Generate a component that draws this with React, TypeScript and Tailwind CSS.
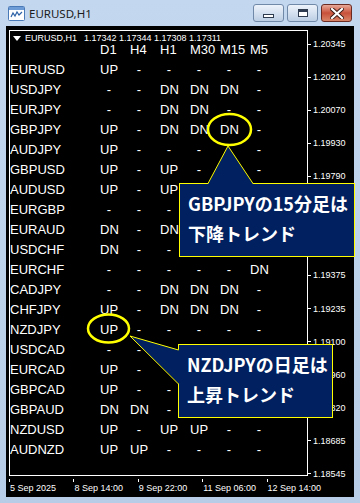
import React from "react";

const cols = ["D1", "H4", "H1", "M30", "M15", "M5"];

// "_" = cell hidden under a callout
const rows: [string, string][] = [
  ["EURUSD", "UP - - - - -"],
  ["USDJPY", "- - DN DN DN -"],
  ["EURJPY", "- - DN DN - -"],
  ["GBPJPY", "UP - DN DN DN -"],
  ["AUDJPY", "UP - - - - -"],
  ["GBPUSD", "UP - UP - - -"],
  ["AUDUSD", "UP - UP _ _ _"],
  ["EURGBP", "- - - _ _ _"],
  ["EURAUD", "DN - DN _ _ _"],
  ["USDCHF", "DN - - _ _ _"],
  ["EURCHF", "- - - - - DN"],
  ["CADJPY", "- - DN DN DN -"],
  ["CHFJPY", "UP - DN DN DN -"],
  ["NZDJPY", "UP - - - - -"],
  ["USDCAD", "- - - _ _ _"],
  ["EURCAD", "UP - - _ _ _"],
  ["GBPCAD", "UP - - _ _ _"],
  ["GBPAUD", "DN DN - _ _ _"],
  ["NZDUSD", "UP - UP UP - -"],
  ["AUDNZD", "UP UP - - - -"],
];

const prices = [
  "1.20345", "1.20210", "1.20070", "1.19930", "1.19790", "", "",
  "1.19375", "1.19235", "1.19100", "1.18960", "1.18820", "1.18685", "1.18545",
];

const times = ["5 Sep 2025", "8 Sep 14:00", "9 Sep 22:00", "11 Sep 06:00", "12 Sep 14:00"];

const mono = { fontFamily: '"Liberation Sans", Arial, sans-serif' };
const jp = { fontFamily: '"Noto Sans CJK JP", "Noto Sans", sans-serif' };

function TitleButtons() {
  return (
    <div className="flex items-start gap-[3px] pt-[4px] pr-[8px]">
      <div className="flex h-[18px] w-[31px] items-center justify-center rounded-[3px] border border-[#7189a8] bg-gradient-to-b from-[#eef3fa] via-[#d5e1f0] to-[#bccee4]">
        <div className="mt-[5px] h-[4px] w-[11px] border border-[#2e3b4e] bg-white" />
      </div>
      <div className="flex h-[18px] w-[31px] items-center justify-center rounded-[3px] border border-[#7189a8] bg-gradient-to-b from-[#eef3fa] via-[#d5e1f0] to-[#bccee4]">
        <div className="h-[8px] w-[10px] border border-[#2e3b4e] border-t-[3px] bg-white" />
      </div>
      <div className="flex h-[18px] w-[31px] items-center justify-center rounded-[3px] border border-[#6b2a22] bg-gradient-to-b from-[#e8a898] via-[#c8503a] to-[#d88468]">
        <svg width="14" height="11" viewBox="0 0 14 11">
          <path d="M2 1 L12 10 M12 1 L2 10" stroke="#3b1a14" strokeWidth="4" strokeLinecap="square" />
          <path d="M2 1 L12 10 M12 1 L2 10" stroke="#ffffff" strokeWidth="2.2" strokeLinecap="square" />
        </svg>
      </div>
    </div>
  );
}

function WinIcon() {
  return (
    <svg width="17" height="15" viewBox="0 0 17 15">
      <rect x="0.5" y="0.5" width="16" height="14" rx="1" fill="#ffffff" stroke="#4a79b8" />
      <rect x="1" y="1" width="15" height="3" fill="#6c9bd6" />
      <path d="M3 11 L5 7 L7 10 L9 6 L11 9 L14 6" stroke="#2f63a8" strokeWidth="1.2" fill="none" />
    </svg>
  );
}

function Cell({ v }: { v: string }) {
  return (
    <div className="w-[30px]">
      {v !== "_" && <span className="inline-block w-[18px] text-center">{v}</span>}
    </div>
  );
}

export default function App() {
  return (
    <div className="flex h-[503px] w-[360px] flex-col overflow-hidden bg-gradient-to-b from-[#c3d8ef] to-[#b7cde7]">
      <div className="flex h-[26px] justify-between">
        <div className="flex items-center gap-[4px] pl-[8px] pt-[1px]">
          <WinIcon />
          <span className="text-[11.5px] text-[#1b1b1b]" style={{ fontFamily: '"Noto Sans", sans-serif' }}>
            EURUSD,H1
          </span>
        </div>
        <TitleButtons />
      </div>

      <div className="relative mx-[6px] flex h-[471px] flex-col bg-black text-white" style={mono}>
        <div className="flex pt-[4px]">
          <div className="ml-[3px] h-[446px] w-[299px] border border-white">
            <div className="mt-[3px] flex h-[9px] items-center text-[9px] leading-[9px]">
              <svg width="8" height="5" viewBox="0 0 8 5" className="ml-[3px]">
                <path d="M0 0 L8 0 L4 5 Z" fill="#ffffff" />
              </svg>
              <span className="ml-[4px]">EURUSD,H1</span>
              <span className="ml-[7px]">1.17342 1.17344 1.17308 1.17311</span>
            </div>
            <div className="-mt-[3.5px] text-[13px] leading-[20px]">
              <div className="flex h-[20px]">
                <div className="w-[90px]" />
                {cols.map((c) => (
                  <div key={c} className="w-[30px]">
                    {c}
                  </div>
                ))}
              </div>
              {rows.map(([sym, vals]) => (
                <div key={sym} className="flex h-[20px]">
                  <div className="w-[90px]">{sym}</div>
                  {vals.split(" ").map((v, i) => (
                    <Cell key={i} v={v} />
                  ))}
                </div>
              ))}
            </div>
          </div>
          <div className="pt-[9px]">
            <div className="flex h-[440px] flex-col justify-between">
              {prices.map((p, i) => (
                <div key={i} className="flex h-[10px] items-center">
                  <div className="h-px w-[3px] bg-white" />
                  <span className="ml-[2px] text-[9px] leading-[10px]">{p}</span>
                </div>
              ))}
            </div>
          </div>
        </div>
        <div className="ml-[3px] flex">
          {times.map((t) => (
            <div key={t} className="flex w-[64.4px] flex-col items-start">
              <div className="h-[3px] w-px bg-white" />
              <span className="mt-[1px] whitespace-nowrap pl-[1px] text-[9px] leading-[10px]">{t}</span>
            </div>
          ))}
        </div>

        <div
          className="absolute left-[173px] top-[157px] h-[74px] w-[176px] border border-[#ffff00] bg-[#002060] pl-[8px] pt-[4px] text-[18px] font-bold leading-[30px] text-white"
          style={jp}
        >
          <div>GBPJPYの15分足は</div>
          <div>下降トレンド</div>
        </div>
        <div
          className="absolute left-[172px] top-[318px] h-[74px] w-[155px] border border-[#ffff00] bg-[#002060] pl-[8px] pt-[4px] text-[18px] font-bold leading-[30px] text-white"
          style={jp}
        >
          <div>NZDJPYの日足は</div>
          <div>上昇トレンド</div>
        </div>

        <svg
          className="pointer-events-none absolute left-0 top-0 overflow-visible"
          width="347"
          height="471"
          viewBox="6 26 347 471"
        >
          <ellipse cx="229.5" cy="129.5" rx="21.5" ry="15.5" fill="none" stroke="#ffff00" strokeWidth="2.5" />
          <ellipse cx="108.5" cy="328.5" rx="20.5" ry="14" fill="none" stroke="#ffff00" strokeWidth="2.5" />
          <polygon points="228,146 208,184 253,184" fill="#002060" />
          <polyline points="208,183.5 228,146 253,183.5" fill="none" stroke="#ffff00" strokeWidth="1" />
          <polygon points="130,336 179,350 179,384" fill="#002060" />
          <polyline points="178.5,350 130,336 178.5,384" fill="none" stroke="#ffff00" strokeWidth="1" />
        </svg>
      </div>
    </div>
  );
}
